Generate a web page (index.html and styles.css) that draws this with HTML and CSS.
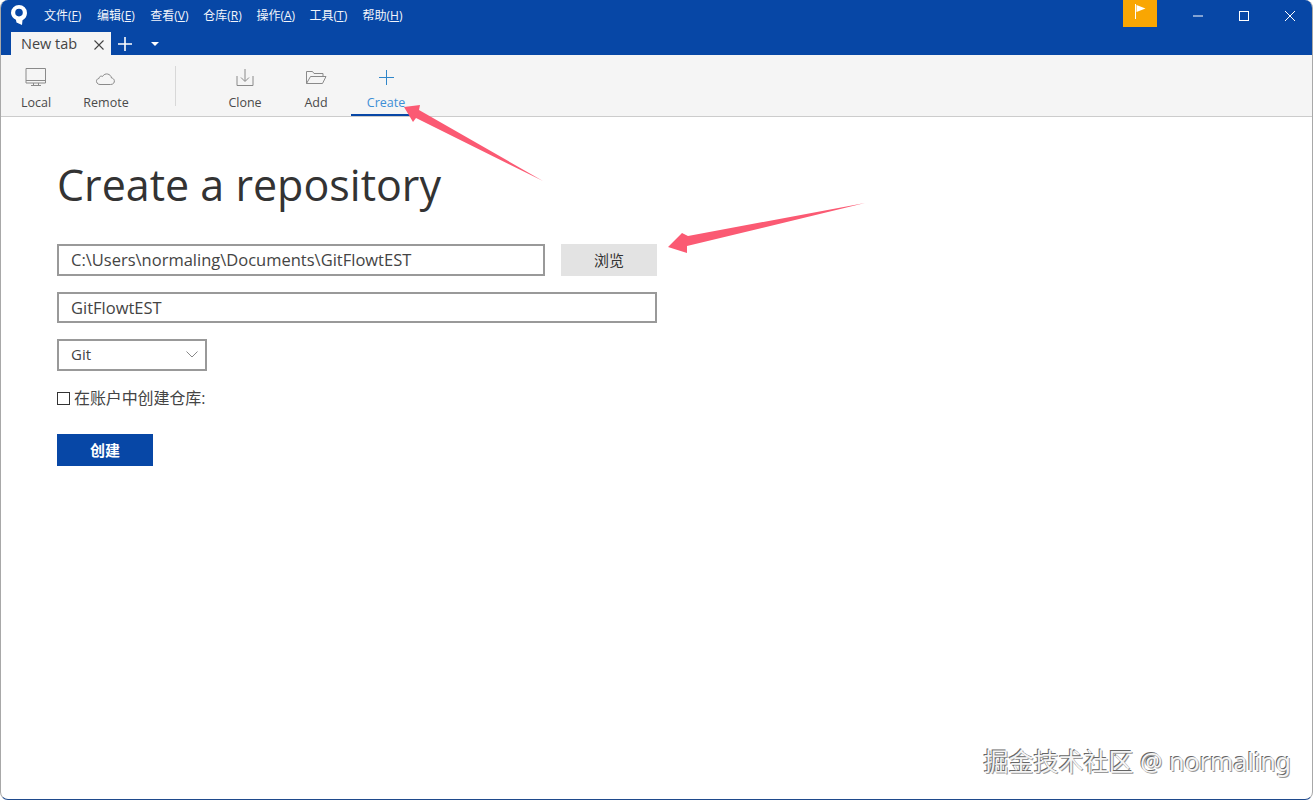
FILE: index.html
```html
<!DOCTYPE html>
<html lang="zh">
<head>
<meta charset="utf-8">
<title>Create a repository</title>
<link rel="stylesheet" href="styles.css">
</head>
<body>
<div class="window">
  <header class="chrome">
    <div class="titlebar">
      <svg class="logo" width="18" height="22" viewBox="0 0 18 22"><path fill="#fff" fill-rule="evenodd" d="M9 1a8 8 0 0 1 8 8c0 3.300-2 6-4.500 7.200L12 21l-5.500-2.500-.6-2.800A8 8 0 0 1 1 9a8 8 0 0 1 8-8zm0 3.800a3.800 3.800 0 1 0 0 7.600 3.800 3.800 0 0 0 0-7.600z"/></svg>
      <nav class="menu">
        <span>文件(<u>F</u>)</span><span>编辑(<u>E</u>)</span><span>查看(<u>V</u>)</span><span>仓库(<u>R</u>)</span><span>操作(<u>A</u>)</span><span>工具(<u>T</u>)</span><span>帮助(<u>H</u>)</span>
      </nav>
      <div class="flag"><svg width="14" height="16" viewBox="0 0 14 16"><path d="M1.500 1v15" stroke="#fff" fill="none"/><path d="M2.500 2l9 3.500-9 3.500z" fill="#fff"/></svg></div>
      <div class="winbtns">
        <svg width="12" height="12" viewBox="0 0 12 12"><path d="M1 6h10" stroke="#fff" fill="none"/></svg>
        <svg width="12" height="12" viewBox="0 0 12 12"><rect x="1.500" y="1.500" width="9" height="9" stroke="#fff" fill="none"/></svg>
        <svg width="12" height="12" viewBox="0 0 12 12"><path d="M1 1l10 10M11 1L1 11" stroke="#fff" fill="none"/></svg>
      </div>
    </div>
    <div class="tabrow">
      <div class="tab"><span>New tab</span><svg width="10" height="10" viewBox="0 0 10 10"><path d="M.5.500l9 9M9.500.500l-9 9" stroke="#444" stroke-width="1.100" fill="none"/></svg></div>
      <svg class="plus" width="14" height="14" viewBox="0 0 14 14"><path d="M7 0v14M0 7h14" stroke="#fff" stroke-width="1.600" fill="none"/></svg>
      <svg class="caret" width="8" height="4" viewBox="0 0 8 4"><path d="M0 0h8L4 4z" fill="#fff"/></svg>
    </div>
  </header>

  <div class="toolbar">
    <div class="tool tool-local">
      <svg width="24" height="20" viewBox="0 0 24 20"><path d="M3.500 .5h19.500v14.500H3.500zM3.500 12.500H23M11 15v2.500M16 15v2.500M8.500 17.500h10" transform="translate(-1.500 0)" stroke="#8a8a8a" fill="none"/></svg>
      <span>Local</span>
    </div>
    <div class="tool tool-remote">
      <svg class="shift-left" width="22" height="20" viewBox="0 0 22 20"><path d="M6 16.500h10.500c5 0 5-6 1-6.500-.5-4-6.500-6-9-1.500C7 7.500 5 8.500 5 10.500c-4 .5-3 6 1 6z" stroke="#8a8a8a" fill="none"/></svg>
      <span>Remote</span>
    </div>
    <div class="sep"></div>
    <div class="tool tool-clone">
      <svg width="22" height="20" viewBox="0 0 22 20"><path d="M11.500 1v12M7.500 9.500l4 4 4-4M3.500 8v9.500h16V8" transform="translate(-.5 0)" stroke="#8a8a8a" fill="none"/></svg>
      <span>Clone</span>
    </div>
    <div class="tool tool-add">
      <svg width="22" height="20" viewBox="0 0 22 20"><path d="M1.500 15.500V3.500h6l1.500 2h9V8.500M1.500 15.500h16l3.500-7H5.500z" stroke="#8a8a8a" fill="none"/></svg>
      <span>Add</span>
    </div>
    <div class="tool tool-create active">
      <svg width="22" height="20" viewBox="0 0 22 20"><path d="M11.500 2v15M4 9.500h15" stroke="#2f86c9" fill="none"/></svg>
      <span>Create</span>
    </div>
  </div>

  <main class="content">
    <h1>Create a repository</h1>
    <div class="row">
      <div class="field field-path">C:\Users\normaling\Documents\GitFlowtEST</div>
      <div class="browse">浏览</div>
    </div>
    <div class="field field-name">GitFlowtEST</div>
    <div class="field field-select"><span>Git</span>
      <svg width="12" height="7" viewBox="0 0 12 7"><path d="M.5.500L6 6l5.500-5.500" stroke="#888" fill="none"/></svg>
    </div>
    <label class="check"><i></i><span>在账户中创建仓库:</span></label>
    <div class="create-btn">创建</div>
  </main>

  <div class="edge"></div>
  <svg class="arrows" width="1313" height="800" viewBox="0 0 1313 800">
    <path fill="#fb5a73" d="M404 107L420 105 419 110 543 181 416 118 413 122z"/>
    <path fill="#fb5a73" d="M668 247L682 233 688 236 865 203 687 246 687 253z"/>
  </svg>
  <div class="watermark">掘金技术社区 @ normaling</div>
</div>
</body>
</html>
```
FILE: styles.css
```css
* { box-sizing: border-box; }
html, body { margin: 0; padding: 0; background: #fff; }
body {
  width: 1313px;
  height: 800px;
  overflow: hidden;
  font-family: "Open Sans", "Noto Sans CJK SC", sans-serif;
  color: #333;
}
.window {
  position: relative;
  width: 1313px;
  height: 800px;
  display: flex;
  flex-direction: column;
  border-radius: 8px;
  overflow: hidden;
  background: #fff;
  border-left: 1px solid #a8a8a8;
  border-right: 1px solid #a8a8a8;
  border-bottom: 1px solid #1f4a8c;
}
.edge {
  position: absolute;
  left: -1px;
  top: 732px;
  bottom: 0;
  width: 1px;
  background: #2a5f9e;
}
.chrome {
  height: 55px;
  margin: 0 -1px;
  background: #0747a6;
  flex: none;
}
.titlebar {
  height: 31px;
  display: flex;
  align-items: flex-start;
  padding-left: 10px;
  color: #fff;
}
.logo { margin-top: 4px; flex: none; }
.menu {
  display: flex;
  margin-left: 16px;
  font-size: 12px;
  line-height: 16px;
  padding-top: 8px;
  color: #f2f5fb;
}
.menu span { white-space: nowrap; width: 53.100px; }
.flag {
  width: 34px;
  height: 27px;
  background: #f9a602;
  margin-left: auto;
  margin-right: 35px;
  display: flex;
  justify-content: center;
  padding: 3px 0 0 2px;
}
.winbtns {
  display: flex;
  gap: 34px;
  padding-top: 10px;
  margin-right: 17px;
}
.tabrow {
  height: 24px;
  display: flex;
  align-items: flex-end;
  padding-left: 11px;
}
.tab {
  width: 100px;
  height: 23px;
  background: #f5f5f5;
  display: flex;
  align-items: center;
  justify-content: space-between;
  padding: 0 7px 0 10px;
  font-size: 14.500px;
  color: #444;
}
.tab svg { margin-top: 2px; }
.plus { margin: 0 0 4px 7px; }
.caret { margin: 0 0 9px 19px; }
.toolbar {
  height: 62px;
  flex: none;
  position: relative;
  display: flex;
  background: #f5f5f5;
  border-bottom: 1px solid #ccc;
  font-size: 12.500px;
  color: #4a4a4a;
}
.tool {
  display: flex;
  flex-direction: column;
  align-items: center;
  height: 61px;
  padding-top: 13px;
  flex: none;
}
.tool span { display: block; line-height: 16px; margin-top: 7px; }
.shift-left { margin-right: 2px; }
.tool-local { width: 70px; }
.tool-remote { width: 70px; }
.sep { width: 1px; height: 40px; margin: 11px 34px 0 34px; background: #d8d8d8; flex: none; }
.tool-clone { width: 70px; }
.tool-add { width: 70px; margin-left: 1px; }
.tool-create { width: 70px; border-bottom: 2px solid #0747a6; height: 61px; }
.active span { color: #3d8fd6; }
.content {
  flex: 1;
  padding: 42px 0 0 56px;
}
h1 {
  margin: 0 0 33px;
  font-size: 43px;
  font-weight: 400;
  line-height: 52px;
  color: #333;
}
.row { display: flex; gap: 16px; }
.field {
  border: 2px solid #999;
  height: 32px;
  display: flex;
  align-items: center;
  padding-left: 12px;
  padding-bottom: 2px;
  font-size: 16.500px;
  color: #444;
}
.field-path { width: 488px; }
.field-name { width: 600px; height: 31px; margin-top: 16px; padding-bottom: 0; }
.field-select {
  width: 150px;
  margin-top: 16px;
  justify-content: space-between;
  padding-right: 7px;
  font-size: 15px;
}
.browse {
  width: 96px;
  height: 32px;
  padding-bottom: 2px;
  background: #e3e3e3;
  display: flex;
  align-items: center;
  justify-content: center;
  font-size: 15px;
}
.check {
  display: flex;
  align-items: center;
  margin-top: 15px;
  height: 24px;
  font-size: 16px;
  color: #444;
}
.check i {
  width: 13px;
  height: 13px;
  border: 1px solid #333;
  margin-right: 4px;
}
.check span { letter-spacing: -.1px; margin-top: -2px; }
.create-btn {
  width: 96px;
  height: 32px;
  margin-top: 24px;
  padding-bottom: 2px;
  background: #0747a6;
  color: #fff;
  font-weight: 700;
  font-size: 15px;
  display: flex;
  align-items: center;
  justify-content: center;
}
.arrows { position: absolute; left: -1px; top: 0; pointer-events: none; }
.watermark {
  position: absolute;
  right: 21px;
  bottom: 21px;
  font-family: "Noto Sans", "Noto Sans CJK SC", sans-serif;
  font-size: 25px;
  line-height: 34px;
  color: #f4f4f4;
  text-shadow: -1px -1px 0 #666, 1px 1px 0 #999;
  white-space: nowrap;
}
```
